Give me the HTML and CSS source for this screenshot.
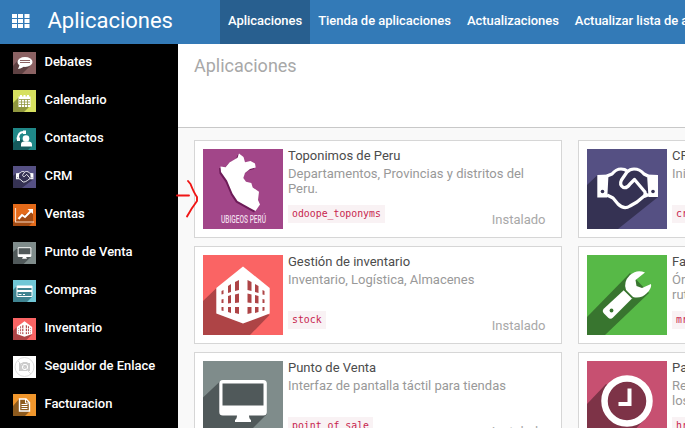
FILE: index.html
```html
<!DOCTYPE html>
<html lang="es">
<head>
<meta charset="utf-8">
<title>Aplicaciones</title>
<link rel="stylesheet" href="styles.css">
</head>
<body>
<svg class="defs" width="0" height="0">
  <symbol id="handshake" viewBox="0 0 80 80" preserveAspectRatio="none">
    <path fill="#555083" d="M0 0h80v80H0z"/>
    <path fill="#353253" d="M0 36 10.500 26 20.500 27 30 21 40 22 52 21 61 27 71 48 31 80H0z"/>
    <path fill="#fff" d="M10.300 26 21.500 25.500 20.300 48.500H10.300zM60 25.500 71 26V48H61.500z"/>
    <circle cx="15.500" cy="42.500" r="1.800" fill="#353253"/><circle cx="66" cy="42.500" r="1.800" fill="#353253"/>
    <path fill="none" stroke="#fff" stroke-width="3.200" stroke-linejoin="round" d="M20 27 25 25Q29 20 34 20 38 20 40 22M61 27 57 25Q53 20 47 20 43 20 40 23L34.500 31Q32 36 36.500 38.500 40 39.500 43 35L47.500 30.500 58 43Q59 46 56 48L50 53 43 57Q37 61 31 55L26 49 20 46M57 47.500 62 45.500"/>
  </symbol>
  <symbol id="building" viewBox="0 0 80 80" preserveAspectRatio="none">
    <path fill="#fa6464" d="M0 0h80v80H0z"/>
    <path fill="#ae4446" d="M0 46 13.500 33 66.500 60 47 80H0z"/>
    <path fill="#fff" d="M40 11.500 66.700 33V58.500L40 68.500 13.300 58.500V33z"/>
    <path fill="#ae4446" d="M32 27l4-2v10l-4 1zM25 31l3-2v8l-3 1zM18.500 36l2-1v4l-2 .5zM32 39.500l4-1v9l-4 .5zM25 41l3-1v8l-3 .5zM18.500 44.500l2-.5v4h-2zM32 52h4v7l-4-1zM25 52h3v6l-3-1zM18.500 52h2v4l-2-.5zM44.500 25l4 2v9l-4-1zM52 29l3.500 2v7l-3.500-1zM59.500 35l2 1v4l-2-.5zM44.500 38.500l4 1v8.500l-4-.5zM52 40l3.500 1v7.500l-3.500-.5zM59.500 44l2 .5V48h-2zM44.500 52h4v6l-4 1zM52 52h3.500v5l-3.500 1zM59.500 52h2v3.500l-2 .5z"/>
  </symbol>
  <symbol id="monitor" viewBox="0 0 80 80" preserveAspectRatio="none">
    <path fill="#7f8c8b" d="M0 0h80v80H0z"/>
    <path fill="#50595a" d="M0 36.500 17.500 20 64 53 37 80H0z"/>
    <rect x="16.300" y="19" width="47.500" height="35.500" rx="3.500" fill="#fff"/>
    <path fill="#50595a" d="M19.500 22.500h41V44.500h-41z"/>
    <path fill="#fff" d="M34 54h12q0 4 2 5v2H32v-2q2-1 2-5z"/>
  </symbol>
  <path id="peru" d="M32 4.500 36.500 8 38 13.300 43.500 12 48 14.500 48.700 18.500 43 20 38 24 36.300 29 39 32.700 44.300 34 45.700 38.500 52 42.700 51 51 53 55.500 48.500 62 43 59 30.500 52 25.500 44.500 20 31.500 14 23 13.500 17.500 18.500 18.300 22.500 13.500 30.500 8.700z"/>
</svg>

<header class="navbar">
  <svg class="apps" viewBox="0 0 18 14"><path fill="#fff" d="M0 0h5v4H0zM6 0h5v4H6zM12.500 0h5v4h-5zM0 5h5v4H0zM6 5h5v4H6zM12.500 5h5v4h-5zM0 10h5v4H0zM6 10h5v4H6zM12.500 10h5v4h-5z"/></svg>
  <span class="brand">Aplicaciones</span>
  <nav class="menu">
    <a class="entry active">Aplicaciones</a><a class="entry">Tienda de aplicaciones</a><a class="entry">Actualizaciones</a><a class="entry">Actualizar lista de aplicaciones</a>
  </nav>
</header>

<div class="body">
  <aside class="sidebar">
    <a class="side"><svg class="mini" viewBox="0 0 23 22"><path fill="#8b6263" d="M0 0h23v22H0z"/><path fill="#5e4142" d="M0 14 5 8l14 4L9 22H0z"/><ellipse cx="12" cy="10" rx="7.500" ry="5" fill="#fff"/><path fill="#fff" d="M7 12 5 17q5-1 6-3z"/><path stroke="#8b6263" stroke-width="1" d="M7 8.500h10M7 10.500h10"/></svg>Debates</a>
    <a class="side"><svg class="mini" viewBox="0 0 23 22"><path fill="#d6e05f" d="M0 0h23v22H0z"/><path fill="#90973f" d="M0 13 6 7l11 9-6 6H0z"/><path fill="#fff" d="M5.500 6.500h12V17h-12zM7 5h2v3H7zM10.500 5h2v3h-2zM14 5h2v3h-2z"/><path stroke="#90973f" stroke-width=".8" d="M6 9.500h11M6 12h11M6 14.500h11M8.500 9.500V17M11.500 9.500V17M14.500 9.500V17"/></svg>Calendario</a>
    <a class="side"><svg class="mini" viewBox="0 0 23 22"><path fill="#1f8787" d="M0 0h23v22H0z"/><path fill="#155a5c" d="M0 15 5 10l14 8-4 4H0z"/><path fill="none" stroke="#fff" stroke-width="2" stroke-linecap="round" d="M10.500 4Q5 4 5 11"/><path fill="#fff" d="M10 2.500h3V6h-3zM3.500 9.500H7V13H4z"/><circle cx="13" cy="10.500" r="3.300" fill="#fff"/><path fill="#fff" d="M8 18.500v-2q0-3 3-3h4q4 0 4 3v2z"/></svg>Contactos</a>
    <a class="side"><svg class="mini"><use href="#handshake"/></svg>CRM</a>
    <a class="side"><svg class="mini" viewBox="0 0 23 22"><path fill="#e46a19" d="M0 0h23v22H0z"/><path fill="#a24a12" d="M5 15 8 12l12-5v11l-4 4H0v-4z"/><path fill="none" stroke="#f9d5bd" stroke-width="1.200" d="M2.500 4v14H21"/><path fill="none" stroke="#fff" stroke-width="2" d="m5.500 15 3.500-4 3 2 6-6"/><path fill="#fff" d="M14.500 5H20v5z"/></svg>Ventas</a>
    <a class="side"><svg class="mini"><use href="#monitor"/></svg>Punto de Venta</a>
    <a class="side"><svg class="mini" viewBox="0 0 23 22"><path fill="#70c7d6" d="M0 0h23v22H0z"/><path fill="#408491" d="M0 10 4 6l16 10-6 6H0z"/><rect x="3.500" y="5.500" width="16" height="11.500" rx="1" fill="#fff"/><path fill="#408491" d="M4.500 8h14v2h-14zM4.500 12h14v4h-14z"/><path stroke="#fff" d="M5.500 14.500h3M10 14.500h2"/></svg>Compras</a>
    <a class="side"><svg class="mini"><use href="#building"/></svg>Inventario</a>
    <a class="side"><svg class="mini" viewBox="0 0 23 22"><path fill="#fff" d="M0 0h23v22H0z"/><circle cx="11.500" cy="11" r="9.500" fill="none" stroke="#ddd"/><path fill="#ccc" d="M6 7h3l1-1h4l1 1h2v8H6z"/><circle cx="12" cy="11" r="2.700" fill="none" stroke="#fff"/><path stroke="#ddd" d="m5 5 13 13"/></svg>Seguidor de Enlace</a>
    <a class="side"><svg class="mini" viewBox="0 0 23 22"><path fill="#f0962c" d="M0 0h23v22H0z"/><path fill="#8e5b1e" d="M0 12 6 5l11 12-5 5H0z"/><path fill="#8e5b1e" stroke="#fff" stroke-width="1.400" d="M6.500 5H13l3.500 3.500V17h-10z"/><path fill="none" stroke="#fff" d="M12.500 5v4h4M8.500 10.500h6M8.500 12.500h6M8.500 14.500h6"/></svg>Facturacion</a>
  </aside>

  <main class="content">
    <div class="panel"><h1 class="crumb">Aplicaciones</h1></div>
    <section class="kanban">
      <article class="card">
        <svg class="icon" viewBox="0 0 80 80"><path fill="#a24689" d="M0 0h80v80H0z"/><use href="#peru" x="2.500" y="1.500" fill="#6d1b58"/><use href="#peru" x="4" fill="#fff"/><text class="map-label" x="18" y="74" textLength="45" lengthAdjust="spacingAndGlyphs">UBIGEOS PERÚ</text></svg>
        <div class="info"><h2 class="name">Toponimos de Peru</h2><p class="desc">Departamentos, Provincias y distritos del Peru.</p><div class="foot"><code class="tech">odoope_toponyms</code><span class="state">Instalado</span></div></div>
      </article>
      <article class="card">
        <svg class="icon"><use href="#handshake"/></svg>
        <div class="info"><h2 class="name">CRM</h2><p class="desc">Iniciativas, Oportunidades, Actividades</p><div class="foot"><code class="tech">crm</code><span class="state">Instalado</span></div></div>
      </article>
      <article class="card">
        <svg class="icon"><use href="#building"/></svg>
        <div class="info"><h2 class="name">Gestión de inventario</h2><p class="desc">Inventario, Logística, Almacenes</p><div class="foot"><code class="tech">stock</code><span class="state">Instalado</span></div></div>
      </article>
      <article class="card">
        <svg class="icon" viewBox="0 0 80 80"><path fill="#57b947" d="M0 0h80v80H0z"/><path fill="#38752f" d="M0 62 43 18 62 38 18 80H0z"/><path fill="#fff" d="M37 35 45.500 43 26 62.500Q23.500 65 21 62.500L17 58.500Q14.500 56 17 53.500z"/><circle cx="24.500" cy="55.500" r="1.900" fill="#38752f"/><path fill="#fff" d="M58 17.500Q50 14 43 20 36 27 39 35L46 42Q54 44 60 38 65 33 64 29L55 33 49.500 31 48.500 25z"/><path stroke="#38752f" stroke-width="1.500" d="M37 34.500 45.500 43"/></svg>
        <div class="info"><h2 class="name">Fabricación</h2><p class="desc">Órdenes de producción, listas de materiales,<br>rutas</p><div class="foot"><code class="tech">mrp</code><span class="state">Instalado</span></div></div>
      </article>
      <article class="card">
        <svg class="icon"><use href="#monitor"/></svg>
        <div class="info"><h2 class="name">Punto de Venta</h2><p class="desc">Interfaz de pantalla táctil para tiendas</p><div class="foot"><code class="tech">point_of_sale</code><span class="state">Instalado</span></div></div>
      </article>
      <article class="card">
        <svg class="icon" viewBox="0 0 80 80"><path fill="#c75071" d="M0 0h80v80H0z"/><path fill="#7d3347" d="M0 43 19 23 58 58 37 80H0z"/><circle cx="40" cy="40" r="22.500" fill="#7d3347" stroke="#fff" stroke-width="6.500"/><path fill="#fff" d="M40.500 27.500h4V45H31.500v-4h9z"/></svg>
        <div class="info"><h2 class="name">Partes de horas</h2><p class="desc">Revisar y aprobar los partes de horas de<br>los empleados</p><div class="foot"><code class="tech">hr_timesheet</code><span class="state">Instalado</span></div></div>
      </article>
    </section>
  </main>
</div>
<svg class="arrow" viewBox="0 0 24 40"><path fill="none" stroke="#f01515" stroke-width="1.900" stroke-linecap="round" stroke-linejoin="round" d="M1 16.500H13M12 2 14.500 5Q18 14 21 18V22Q15 30 11 37.500"/></svg>
</body>
</html>
```
FILE: styles.css
```css
* { box-sizing: border-box; }
html, body { height: 100%; }
body {
  margin: 0;
  overflow: hidden;
  font: 13px/15px Roboto, sans-serif;
  color: #4c4c4c;
  background: #f9f9f9;
}
.defs { display: block; }
.navbar {
  display: flex;
  align-items: center;
  height: 44px;
  padding-left: 12px;
  overflow: hidden;
  background: #337ab7;
  color: #fff;
  white-space: nowrap;
}
.apps { width: 18px; height: 14px; flex: none; margin-top: -2px; }
.brand {
  width: 190px;
  flex: none;
  padding-left: 17.5px;
  font-size: 22px;
  line-height: 41px;
  height: 44px;
}
.menu { display: flex; flex: none; }
.entry {
  height: 44px;
  padding: 0 8px;
  line-height: 41px;
  font-weight: 500;
  letter-spacing: -0.04px;
}
.active { background: #285f8f; }
.body { display: flex; height: 384px; }
.sidebar {
  width: 178px;
  flex: none;
  padding-top: 8px;
  overflow: hidden;
  background: #000;
}
.side {
  display: flex;
  gap: 8.5px;
  height: 38px;
  padding-left: 13px;
  line-height: 20px;
  font-weight: 500;
  letter-spacing: -0.05px;
  color: #fff;
}
.mini { width: 23px; height: 22px; flex: none; }
.content { flex: 1; min-width: 0; overflow: hidden; }
.panel {
  height: 84px;
  padding: 12px 16px;
  background: #fff;
  border-bottom: 1px solid #c8c8c8;
}
.crumb {
  margin: 0;
  font-size: 18px;
  line-height: 20px;
  font-weight: 400;
  color: #a8a8a8;
}
.kanban {
  display: grid;
  grid-template-columns: 368px 368px;
  gap: 8px 16px;
  padding: 12px 16px;
}
.card {
  display: flex;
  gap: 5px;
  height: 98px;
  padding: 8px;
  background: #fff;
  border: 1px solid #d6d6d6;
}
.icon { width: 80px; height: 80px; flex: none; }
.info { display: flex; flex: 1; flex-direction: column; min-width: 0; padding-right: 7.5px; }
.name { margin: -1px 0 3px; font-size: 13px; line-height: 15px; font-weight: 400; }
.desc { margin: 0; color: #999; }
.foot {
  display: flex;
  align-items: flex-start;
  justify-content: space-between;
  height: 24px;
  margin-top: auto;
}
.tech {
  height: 18px;
  padding: 0 4px;
  font: 9.85px/18px "DejaVu Sans Mono", monospace;
  color: #c7254e;
  background: #f9f2f4;
}
.state { margin-top: 7px; color: #a8a8a8; }
.map-label { font: 500 10px Roboto, sans-serif; fill: #f0dcea; }
.arrow { position: absolute; left: 176px; top: 179px; width: 24px; height: 40px; }
```
